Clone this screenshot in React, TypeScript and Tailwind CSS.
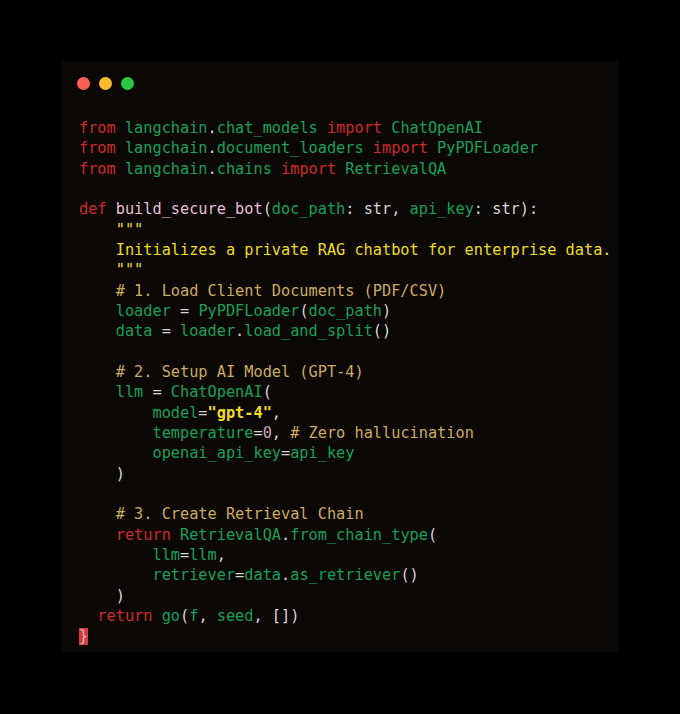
const K = "text-[#d02a2a]";
const G = "text-[#17a157]";
const W = "text-[#d6d6d6]";
const F = "text-[#e8bfd2]";
const Y = "text-[#f0dd1a]";
const C = "text-[#cdab60]";
const N = "text-[#c9a3b8]";

type Tok = [string, string];

const lines: Tok[][] = [
  [["from", K], [" langchain", G], [".", W], ["chat_models ", G], ["import", K], [" ChatOpenAI", G]],
  [["from", K], [" langchain", G], [".", W], ["document_loaders ", G], ["import", K], [" PyPDFLoader", G]],
  [["from", K], [" langchain", G], [".", W], ["chains ", G], ["import", K], [" RetrievalQA", G]],
  [],
  [["def", K], [" build_secure_bot", F], ["(", W], ["doc_path", G], [": str, ", W], ["api_key", G], [": str):", W]],
  [["    \"\"\"", Y]],
  [["    Initializes a private RAG chatbot for enterprise data.", Y]],
  [["    \"\"\"", Y]],
  [["    # 1. Load Client Documents (PDF/CSV)", C]],
  [["    loader", G], [" = ", W], ["PyPDFLoader", G], ["(", W], ["doc_path", G], [")", W]],
  [["    data", G], [" = ", W], ["loader", G], [".", W], ["load_and_split", G], ["()", W]],
  [],
  [["    # 2. Setup AI Model (GPT-4)", C]],
  [["    llm", G], [" = ", W], ["ChatOpenAI", G], ["(", W]],
  [["        model", G], ["=", W], ["\"gpt-4\"", Y + " font-bold"], [",", W]],
  [["        temperature", G], ["=", W], ["0", N], [", ", W], ["# Zero hallucination", C]],
  [["        openai_api_key", G], ["=", W], ["api_key", G]],
  [["    )", W]],
  [],
  [["    # 3. Create Retrieval Chain", C]],
  [["    return", K], [" RetrievalQA", G], [".", W], ["from_chain_type", G], ["(", W]],
  [["        llm", G], ["=", W], ["llm", G], [",", W]],
  [["        retriever", G], ["=", W], ["data", G], [".", W], ["as_retriever", G], ["()", W]],
  [["    )", W]],
  [["  return", K], [" go", G], ["(", W], ["f", G], [", ", W], ["seed", G], [", []", W], [")", W]],
];

export default function App() {
  return (
    <div className="w-[680px] h-[714px] bg-black pt-[61px] pl-[62px]">
      <div className="w-[556px] h-[591px] bg-[#0b0705] pl-[17px] pt-[57px] relative">
        <div className="absolute left-[15px] top-[16px] flex gap-[9px]">
          <span className="w-[13px] h-[13px] rounded-full bg-[#fe5f57]" />
          <span className="w-[13px] h-[13px] rounded-full bg-[#fdbc2e]" />
          <span className="w-[13px] h-[13px] rounded-full bg-[#28c840]" />
        </div>
        <pre className="font-['DejaVu_Sans_Mono',monospace] text-[15.25px] leading-[20.34px] whitespace-pre">
          {lines.map((l, i) => (
            <div key={i} className="h-[20.34px]">
              {l.map(([t, c], j) => (
                <span key={j} className={c}>{t}</span>
              ))}
            </div>
          ))}
          <div className="h-[20.34px]">
            <span className="inline-block bg-[#d83a3a] text-[#b8b8b8] h-[17px] leading-[17px] mt-[1px]">{"}"}</span>
          </div>
        </pre>
      </div>
    </div>
  );
}
